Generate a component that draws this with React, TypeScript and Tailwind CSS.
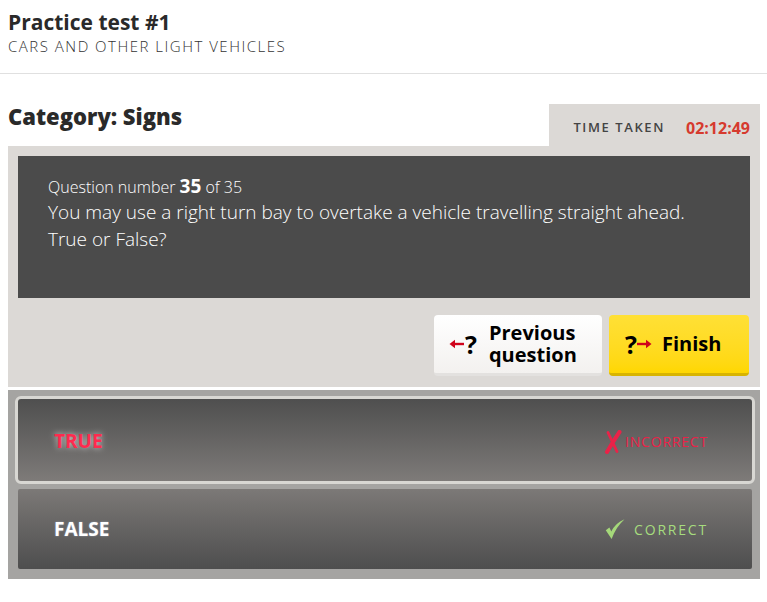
import React from "react";

function ArrowLeft() {
  return (
    <svg width="15" height="10" viewBox="0 0 15 10" className="shrink-0">
      <path d="M15 5H5" stroke="#d0021b" strokeWidth="2.4" />
      <path d="M0.5 5L6 0.8V9.2Z" fill="#d0021b" />
    </svg>
  );
}

function ArrowRight() {
  return (
    <svg width="15" height="10" viewBox="0 0 15 10" className="shrink-0">
      <path d="M0 5H10" stroke="#d0021b" strokeWidth="2.4" />
      <path d="M14.5 5L9 0.8V9.2Z" fill="#d0021b" />
    </svg>
  );
}

function CrossMark() {
  return (
    <svg width="18" height="24" viewBox="0 0 18 24" className="shrink-0">
      <path d="M4 2.5C6.5 8 9.5 14 13 21.5" stroke="#ea2248" strokeWidth="2.8" strokeLinecap="round" fill="none" />
      <path d="M15.5 2C11 8.5 7 15 3 22" stroke="#ea2248" strokeWidth="4" strokeLinecap="round" fill="none" />
    </svg>
  );
}

function CheckMark() {
  return (
    <svg width="20" height="22" viewBox="0 0 20 22" className="shrink-0">
      <path d="M0.8 12.2L6.6 21C9.6 12.8 13.8 6.6 19.5 1.2C12.5 4 8.6 9 6.3 13.4L4.4 9.6Z" fill="#a5d87a" />
    </svg>
  );
}

export default function App() {
  return (
    <div className="w-[767px] min-h-[602px] bg-white font-['Open_Sans',sans-serif] text-[#2a2a2a]">
      {/* heading */}
      <header className="border-b border-[#e0e0e0] px-[8px] pt-[9px] pb-[17px]">
        <h1 className="text-[21px] leading-[26px] font-bold">Practice test #1</h1>
        <p className="mt-px text-[15px] leading-[20px] font-light tracking-[1.5px] text-[#333]">
          CARS AND OTHER LIGHT VEHICLES
        </p>
      </header>

      <div className="pl-[8px] w-[760px]">
        <div className="flex items-start justify-between pt-[28px]">
          <h2 className="text-[22px] leading-[28px] font-extrabold">Category: Signs</h2>
          <div className="mt-[2px] flex h-[42px] w-[211px] items-center justify-end gap-[21px] bg-[#dcd9d6] pr-[10px] pt-[5px]">
            <span className="text-[13px] font-semibold tracking-[1.6px] text-[#444]">TIME TAKEN</span>
            <span className="text-[16px] font-bold text-[#d63a2e]">02:12:49</span>
          </div>
        </div>

        {/* question panel */}
        <div className="bg-[#dcd9d6] px-[10px] pt-[10px] pb-[11px]">
          <div className="h-[142px] bg-[#4b4b4b] px-[30px] pt-[21px] text-white">
            <p className="text-[16px] leading-[18px] font-light">
              Question number <span className="text-[19px] font-bold">35</span> of 35
            </p>
            <p className="mt-[3px] text-[19px] leading-[27px] font-light">
              You may use a right turn bay to overtake a vehicle travelling straight ahead.
              <br />
              True or False?
            </p>
          </div>

          <div className="mt-[17px] flex justify-end gap-[7px] pr-px">
            <button className="flex h-[61px] w-[168px] items-center gap-[1px] rounded-[4px] border-b-[3px] border-[#e3e1df] bg-gradient-to-b from-white to-[#f3f1ef] pl-[15px] text-left text-black">
              <ArrowLeft />
              <span className="text-[25px] font-bold leading-none">?</span>
              <span className="ml-[11px] text-[20px] font-bold leading-[22px]">
                Previous
                <br />
                question
              </span>
            </button>
            <button className="flex h-[61px] w-[140px] items-center rounded-[4px] border-b-[3px] border-[#d8b400] bg-gradient-to-b from-[#ffe035] to-[#ffd700] pl-[16px] text-black">
              <span className="text-[25px] font-bold leading-none">?</span>
              <ArrowRight />
              <span className="ml-[10px] text-[20px] font-bold">Finish</span>
            </button>
          </div>
        </div>

        {/* answers */}
        <div className="mt-[3px] flex flex-col gap-[2px] bg-[#a5a4a2] pl-[7px] pr-[5px] pt-[6px] pb-[7px]">
          <div className="flex h-[88px] items-center justify-between rounded-[6px] border-[3px] border-[#d8d7d3] bg-gradient-to-b from-[#4f4f4f] to-[#7e7b79] pl-[36px] pr-[44px] pt-[3px]">
            <span className="text-[19px] font-bold text-[#ff2a4e] [text-shadow:0_0_6px_rgba(255,255,255,0.7)]">
              TRUE
            </span>
            <span className="flex items-center gap-[3px]">
              <CrossMark />
              <span className="text-[14px] tracking-[0.8px] text-[#ea2248]">INCORRECT</span>
            </span>
          </div>
          <div className="flex h-[86px] items-center justify-between rounded-[5px] border-[3px] border-transparent bg-clip-padding bg-gradient-to-b from-[#7c7977] to-[#4e4e4e] pl-[36px] pr-[44px]">
            <span className="text-[19px] font-bold text-white [text-shadow:0_0_2px_rgba(200,220,255,0.5)]">
              FALSE
            </span>
            <span className="flex items-center gap-[9px]">
              <CheckMark />
              <span className="text-[14px] tracking-[1.8px] text-[#a6dc7e]">CORRECT</span>
            </span>
          </div>
        </div>
      </div>
    </div>
  );
}
